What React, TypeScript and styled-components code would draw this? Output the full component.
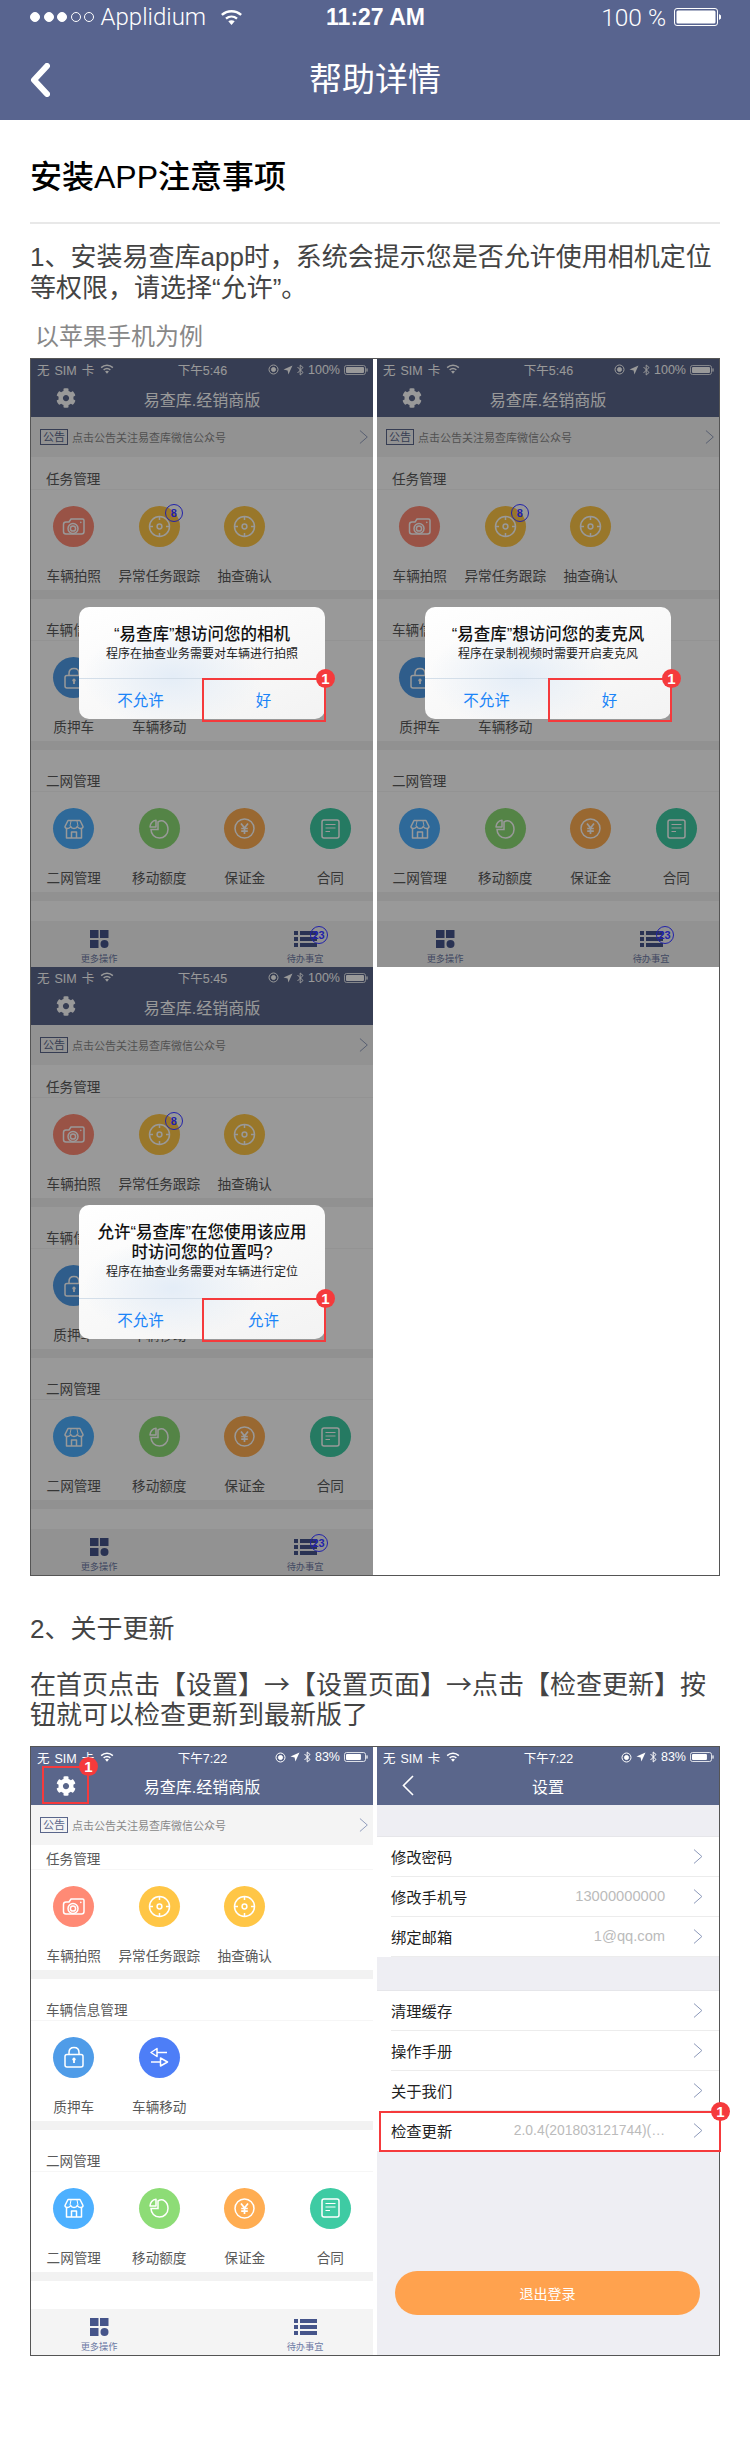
import React from 'react'
import styled, { createGlobalStyle } from 'styled-components'
import { FaCog } from 'react-icons/fa'

const GlobalStyle = createGlobalStyle`
    html, body {
        margin: 0;
        padding: 0;
        background: white;
        font-family: "Liberation Sans", "Noto Sans CJK SC", sans-serif;
    }
`;

const Page = styled.div`
    width: 750px;
    height: 2450px;
    background: white;
    overflow: hidden;
`;

/* page header */
const TopBar = styled.header`
    height: 120px;
    background-color: #58648f;
    color: white;
`;

const StatusRow = styled.div`
    height: 34px;
    padding: 0 29px 0 30px;
    display: grid;
    grid-template-columns: 1fr auto 1fr;
    align-items: center;
`;

const StatusLeft = styled.div`
    display: flex;
    align-items: center;
`;

const StatusRight = styled.div`
    display: flex;
    align-items: center;
    justify-content: flex-end;
`;

const Dot = styled.span<{ $filled?: boolean }>`
    width: 10px;
    height: 10px;
    margin-right: 3.5px;
    border-radius: 50%;
    box-sizing: border-box;
    border: 1px solid white;
    background-color: ${p => (p.$filled ? 'white' : 'transparent')};
`;

const Carrier = styled.span`
    font-family: Roboto, sans-serif;
    font-weight: 300;
    font-size: 24px;
    margin: 0 14px 0 3px;
`;

const Clock = styled.span`
    font-weight: 700;
    font-size: 23px;
`;

const Percent = styled.span`
    font-family: Roboto, sans-serif;
    font-weight: 300;
    font-size: 24.5px;
    margin-right: 8px;
`;

const NavRow = styled.div`
    height: 86px;
    padding: 6px 30px 0;
    box-sizing: border-box;
    display: grid;
    grid-template-columns: 1fr auto 1fr;
    align-items: center;
`;

const NavTitle = styled.div`
    font-size: 33px;
    line-height: 40px;
`;

/* article text */
const Article = styled.main`
    padding: 37px 30px 0;
`;

const Heading = styled.h1`
    margin: 0;
    font-size: 32px;
    line-height: 40px;
    font-weight: 500;
    color: black;
`;

const Rule = styled.hr`
    margin: 25px 0 0;
    border: none;
    height: 2px;
    background-color: #e8e8e8;
`;

const Paragraph = styled.p<{ $top: number }>`
    margin: ${p => p.$top}px 0 0;
    font-size: 26px;
    line-height: 30.5px;
    color: #444;
`;

const ArrowSign = styled.span`
    font-family: "Noto Sans CJK SC", sans-serif;
    line-height: 0;
`;

const Caption = styled.div`
    margin: 19px 0 6px;
    padding-left: 5px;
    font-size: 24px;
    line-height: 30px;
    color: #888;
`;

const Gallery = styled.div<{ $top?: number }>`
    margin-top: ${p => p.$top || 0}px;
    border: 1px solid #555;
    display: grid;
    grid-template-columns: 342px 342px;
    column-gap: 4px;
`;

/* phone screenshots */
const Screen = styled.div<{ $bg?: string }>`
    position: relative;
    height: 608px;
    display: flex;
    flex-direction: column;
    background-color: ${p => p.$bg || 'white'};
`;

const Dim = styled.div`
    position: absolute;
    inset: 0;
    z-index: 1;
    background-color: rgba(0, 0, 0, .4);
`;

const ScreenHead = styled.div`
    position: relative;
    height: 58px;
    flex: none;
    background-color: #5a668b;
    color: white;
`;

const MiniStatus = styled.div`
    height: 21px;
    padding: 0 5px 0 6px;
    display: grid;
    grid-template-columns: 1fr auto 1fr;
    align-items: center;
    font-size: 12.5px;
`;

const MiniLeft = styled.div`
    display: flex;
    align-items: center;
    gap: 6px;
    word-spacing: 1.5px;
`;

const MiniRight = styled.div`
    display: flex;
    align-items: center;
    justify-content: flex-end;
    gap: 4px;
`;

const MiniNav = styled.div`
    position: relative;
    height: 37px;
    display: flex;
    align-items: center;
    justify-content: center;
    font-size: 16px;
`;

const GearSlot = styled.span`
    position: absolute;
    left: 25px;
    top: 8px;
    display: flex;
`;

const BackSlot = styled.span`
    position: absolute;
    left: 25px;
    top: 7px;
    display: flex;
`;

const Notice = styled.div`
    height: 40px;
    flex: none;
    padding: 0 5px 0 9px;
    display: flex;
    align-items: center;
    background-color: #f4f4f4;
    color: #888;
    font-size: 11px;
`;

const NoticeTag = styled.span`
    border: 1px solid #5a668b;
    color: #5a668b;
    font-size: 11px;
    line-height: 14px;
    padding: 0 2px;
    margin-right: 4px;
`;

const NoticeText = styled.span`
    flex: 1;
`;

const SectionTitle = styled.div<{ $height: number }>`
    height: ${p => p.$height}px;
    box-sizing: border-box;
    border-bottom: 1px solid #f6f6f6;
    padding-left: 15px;
    display: flex;
    align-items: flex-end;
    font-size: 13.6px;
    line-height: 19px;
    color: #5a5a5a;
    flex: none;
`;

const IconGrid = styled.div`
    height: 100px;
    flex: none;
    display: grid;
    grid-template-columns: repeat(4, 85.5px);
`;

const Cell = styled.div`
    display: flex;
    flex-direction: column;
    align-items: center;
    padding-top: 16px;
    font-size: 13.6px;
    color: #5a5a5a;
`;

const Disc = styled.div<{ $color: string }>`
    position: relative;
    width: 41px;
    height: 41px;
    border-radius: 50%;
    background-color: ${p => p.$color};
    display: flex;
    align-items: center;
    justify-content: center;
`;

const CellLabel = styled.div`
    margin-top: 20px;
    line-height: 20px;
    white-space: nowrap;
`;

const Band = styled.div`
    height: 9px;
    flex: none;
    background-color: #f2f2f2;
`;

const Filler = styled.div`
    flex: 1;
`;

const TabBar = styled.div`
    height: 46px;
    flex: none;
    display: flex;
    justify-content: space-between;
    background-color: #f4f4f4;
`;

const Tab = styled.div`
    width: 136px;
    padding-top: 9px;
    display: flex;
    flex-direction: column;
    align-items: center;
    font-size: 9.2px;
    color: #6d7aa5;
`;

const TabIcon = styled.div`
    position: relative;
    height: 18px;
    display: flex;
`;

const TabLabel = styled.div`
    margin-top: 4px;
    line-height: 14px;
`;

const CountBadge = styled.span<{ $left: number; $top: number }>`
    position: absolute;
    z-index: 2;
    left: ${p => p.$left}px;
    top: ${p => p.$top}px;
    width: 18px;
    height: 18px;
    box-sizing: border-box;
    border: 1px solid #2222aa;
    border-radius: 50%;
    display: flex;
    align-items: center;
    justify-content: center;
    color: #2222aa;
    font-size: 11px;
    font-weight: 700;
`;

const Alert = styled.div<{ $top: number; $height: number }>`
    position: absolute;
    z-index: 2;
    left: 48px;
    top: ${p => p.$top}px;
    width: 246px;
    height: ${p => p.$height}px;
    border-radius: 10px;
    display: flex;
    flex-direction: column;
    background:
        radial-gradient(ellipse 90px 50px at 38% 62%, #e4edf7 0%, rgba(228, 237, 247, 0) 100%),
        linear-gradient(160deg, #ffffff, #f3f3f3);
`;

const AlertBody = styled.div`
    flex: 1;
    padding-top: 17px;
    box-sizing: border-box;
    border-bottom: 1px solid #d3dee9;
    text-align: center;
`;

const AlertTitle = styled.div`
    font-size: 16.5px;
    line-height: 20px;
    font-weight: 500;
    color: #111;
`;

const AlertText = styled.div`
    font-size: 12px;
    line-height: 20px;
    color: #222;
`;

const AlertActions = styled.div`
    position: relative;
    height: 40px;
    flex: none;
    display: grid;
    grid-template-columns: 1fr 1fr;
`;

const AlertButton = styled.div`
    display: flex;
    align-items: center;
    justify-content: center;
    color: #1a84f8;
    font-size: 15.5px;
`;

const RedBox = styled.div`
    position: absolute;
    z-index: 3;
    box-sizing: border-box;
    border: 2px solid #f53a3c;
`;

const AlertHighlight = styled(RedBox)`
    left: 123px;
    right: -1px;
    height: 44px;
    bottom: -3px;
`;

const GearHighlight = styled(RedBox)`
    left: 11px;
    top: 19px;
    width: 47px;
    height: 38px;
`;

const RowHighlight = styled(RedBox)`
    left: 2px;
    right: -2px;
    top: 0;
    bottom: -1px;
`;

const StepBadge = styled.span`
    position: absolute;
    right: -11px;
    top: -11px;
    width: 19px;
    height: 19px;
    border-radius: 50%;
    background-color: #f53a3c;
    display: flex;
    align-items: center;
    justify-content: center;
    color: white;
    font-size: 15px;
    font-weight: 700;
`;

/* settings screen */
const SettingsBody = styled.div`
    flex: 1;
    display: flex;
    flex-direction: column;
    background-color: #eeeef3;
`;

const RowGroup = styled.div<{ $top: number }>`
    margin-top: ${p => p.$top}px;
    background-color: white;
    padding-left: 14px;
    border-top: 1px solid #e6e6ea;
`;

const Row = styled.div`
    position: relative;
    height: 40px;
    box-sizing: border-box;
    padding-right: 16px;
    border-bottom: 1px solid #ececec;
    display: flex;
    align-items: center;
    font-size: 15.3px;
    color: #222;
`;

const RowLabel = styled.span`
    flex: 1;
`;

const RowValue = styled.span<{ $size?: number }>`
    margin-right: 28px;
    color: #bbb;
    font-size: ${p => p.$size || 14.7}px;
`;

const UpdateRow = styled.div`
    position: relative;
    margin-left: -14px;
`;

const UpdateInner = styled.div`
    padding-left: 14px;
`;

const Logout = styled.div`
    margin: 120px 19px 0 18px;
    height: 44px;
    border-radius: 22px;
    background-color: #ffa24e;
    color: white;
    font-size: 14px;
    display: flex;
    align-items: center;
    justify-content: center;
`;

/* drawings */
function Wifi({ w, color = 'white' }: { w: number; color?: string }) {
    return (
        <svg width={w} height={w * 0.72} viewBox="0 0 25 18" fill="none" stroke={color} strokeWidth="2.6">
            <path d="M2 6.5C8 1 17 1 23 6.5" />
            <path d="M6.5 10.5C10 7.5 15 7.5 18.5 10.5" />
            <path d="M9 13.2L12.5 17.4L16 13.2C14 11.8 11 11.8 9 13.2Z" fill={color} stroke="none" />
        </svg>
    )
}

function Chevron({ color = '#8a97b8', h = 14 }: { color?: string; h?: number }) {
    return (
        <svg width={h * 0.66} height={h} viewBox="0 0 10 15" fill="none" stroke={color} strokeWidth="1">
            <path d="M1 .5L9 7.5L1 14.5" />
        </svg>
    )
}

function MiniBattery({ level }: { level: number }) {
    return (
        <svg width="24" height="10" viewBox="0 0 24 10">
            <rect x=".5" y=".5" width="21" height="9" rx="2" fill="none" stroke="white" strokeWidth=".8" />
            <rect x="2" y="2" width={18 * level} height="6" rx="1" fill="white" />
            <rect x="22.4" y="3.4" width="1.2" height="3.2" fill="white" />
        </svg>
    )
}

function LockRound() {
    return (
        <svg width="11" height="11" viewBox="0 0 11 11" fill="none" stroke="white">
            <circle cx="5.5" cy="5.5" r="4.5" />
            <circle cx="5.5" cy="5.5" r="2" fill="white" />
        </svg>
    )
}

function Arrow() {
    return (
        <svg width="10" height="10" viewBox="0 0 10 10" fill="white">
            <path d="M.5 4.6L9.5 .5L5.4 9.5L4.6 5.4Z" />
        </svg>
    )
}

function Bluetooth() {
    return (
        <svg width="7" height="12" viewBox="0 0 7 12" fill="none" stroke="white">
            <path d="M.5 3L6 8.5L3.2 11V1L6 3.5L.5 9" />
        </svg>
    )
}

const glyph = { fill: 'none', stroke: 'white', strokeWidth: 1.5, strokeLinejoin: 'round' as const }

function CameraGlyph() {
    return (
        <svg width="23" height="21" viewBox="0 0 23 21" {...glyph}>
            <path d="M4 6H7L9 3H20.5C21.3 3 22 3.7 22 4.5V15.5C22 17 21 18 19.5 18H4C2.5 18 1.5 17 1.5 15.5V8.5C1.5 7 2.5 6 4 6Z" />
            <circle cx="11" cy="12.5" r="5" />
            <circle cx="11" cy="12.5" r="2.6" />
            <circle cx="18.8" cy="6.4" r=".8" fill="white" stroke="none" />
        </svg>
    )
}

function TargetGlyph() {
    return (
        <svg width="23" height="23" viewBox="0 0 23 23" {...glyph}>
            <circle cx="11.5" cy="11.5" r="10" />
            <circle cx="11.5" cy="11.5" r="2.4" />
            <path d="M11.5 1.5V5M11.5 18V21.5M1.5 11.5H5M18 11.5H21.5" />
        </svg>
    )
}

function LockGlyph() {
    return (
        <svg width="20" height="22" viewBox="0 0 20 22" {...glyph}>
            <path d="M5 9V6.5C5 3.5 7 1.5 10 1.5S15 3.5 15 6.5V9" />
            <rect x="1" y="8.5" width="18" height="12.5" rx="2" />
            <circle cx="10" cy="13.2" r="1.6" fill="white" stroke="none" />
            <path d="M10 14V17" strokeWidth="1.8" />
        </svg>
    )
}

function MoveGlyph() {
    return (
        <svg width="19" height="20" viewBox="0 0 19 20" {...glyph}>
            <path d="M7 1.5L1 5.5L7 9.5Z" />
            <path d="M7 5.5H17" />
            <path d="M10.5 11L17.5 15L10.5 19Z" />
            <path d="M1 15H10.5" />
        </svg>
    )
}

function ShopGlyph() {
    return (
        <svg width="20" height="20" viewBox="0 0 20 20" {...glyph}>
            <path d="M4 1.5H16L19 7.5C19 9 17.5 9.5 16.5 9.5C15 9.5 14 8.8 13.3 7.5C12.8 8.8 11.5 9.5 10 9.5S7.2 8.8 6.7 7.5C6 8.8 5 9.5 3.5 9.5C2.5 9.5 1 9 1 7.5Z" />
            <path d="M2.5 9.5V19H17.5V9.5" />
            <path d="M7.5 19V13H12.5V19" />
            <path d="M7 2L6 7M13 2L14 7" strokeWidth="1" />
        </svg>
    )
}

function PieGlyph() {
    return (
        <svg width="20" height="20" viewBox="0 0 20 20" {...glyph}>
            <path d="M9 3C14-.3 19 4 19 10.5C19 15.5 15 19 10.5 19C5.5 19 2 15 2 10.5H9Z" strokeLinejoin="miter" />
            <path d="M7 1.2V8H1C1 4.5 3.5 1.5 7 1.2Z" />
        </svg>
    )
}

function YenGlyph() {
    return (
        <svg width="21" height="21" viewBox="0 0 21 21" {...glyph}>
            <circle cx="10.5" cy="10.5" r="9.5" />
            <path d="M7 5.5L10.5 10L14 5.5M10.5 10V16M7.2 10.5H13.8M7.2 13.2H13.8" strokeWidth="1.7" />
        </svg>
    )
}

function DocGlyph() {
    return (
        <svg width="19" height="20" viewBox="0 0 19 20" {...glyph}>
            <rect x="1" y="1" width="17" height="18" rx="2" />
            <path d="M4.5 5.5H14.5M4.5 9H14.5M4.5 12.5H9" strokeWidth="1.2" />
        </svg>
    )
}

function GridIcon() {
    return (
        <svg width="19" height="18" viewBox="0 0 19 18" fill="#45548a">
            <rect width="8.5" height="8" />
            <rect x="10" width="8.5" height="8" />
            <rect y="10" width="8.5" height="8" />
            <circle cx="14.5" cy="14" r="4" />
        </svg>
    )
}

function ListIcon() {
    return (
        <svg width="23" height="18" viewBox="0 0 23 18" fill="#45548a">
            <rect y="1" width="4" height="4" />
            <rect x="6" y="1" width="17" height="4" />
            <rect y="7" width="4" height="4" />
            <rect x="6" y="7" width="17" height="4" />
            <rect y="13" width="4" height="4" />
            <rect x="6" y="13" width="17" height="4" />
        </svg>
    )
}

const sections = [
    {
        title: '任务管理',
        items: [
            { label: '车辆拍照', color: '#ff8a75', icon: <CameraGlyph /> },
            { label: '异常任务跟踪', color: '#ffc646', icon: <TargetGlyph />, count: true },
            { label: '抽查确认', color: '#ffc646', icon: <TargetGlyph /> },
        ],
    },
    {
        title: '车辆信息管理',
        items: [
            { label: '质押车', color: '#4f9ce8', icon: <LockGlyph /> },
            { label: '车辆移动', color: '#4d7ef7', icon: <MoveGlyph /> },
        ],
    },
    {
        title: '二网管理',
        items: [
            { label: '二网管理', color: '#4db0ff', icon: <ShopGlyph /> },
            { label: '移动额度', color: '#8ddc76', icon: <PieGlyph /> },
            { label: '保证金', color: '#ffad52', icon: <YenGlyph /> },
            { label: '合同', color: '#3ecba3', icon: <DocGlyph /> },
        ],
    },
]

function MiniStatusBar({ time, level, power }: { time: string; level: number; power: string }) {
    return (
        <MiniStatus>
            <MiniLeft>无 SIM 卡 <Wifi w={14} /></MiniLeft>
            <span>{time}</span>
            <MiniRight>
                <LockRound />
                <Arrow />
                <Bluetooth />
                {power}
                <MiniBattery level={level} />
            </MiniRight>
        </MiniStatus>
    )
}

interface AlertInfo {
    top: number
    height: number
    title: React.ReactNode
    text: string
    ok: string
}

interface HomeProps {
    time: string
    level?: number
    power?: string
    alert?: AlertInfo
    firstTitle: number
    stepOnGear?: boolean
}

function HomeScreen({ time, level = 1, power = '100%', alert, firstTitle, stepOnGear }: HomeProps) {
    return (
        <Screen>
            <ScreenHead>
                <MiniStatusBar time={time} level={level} power={power} />
                <MiniNav>
                    <GearSlot><FaCog size={20} /></GearSlot>
                    易查库.经销商版
                </MiniNav>
            </ScreenHead>
            <Notice>
                <NoticeTag>公告</NoticeTag>
                <NoticeText>点击公告关注易查库微信公众号</NoticeText>
                <Chevron />
            </Notice>
            {sections.map((section, i) => (
                <React.Fragment key={section.title}>
                    <SectionTitle $height={i === 0 ? firstTitle : 42}>{section.title}</SectionTitle>
                    <IconGrid>
                        {section.items.map(item => (
                            <Cell key={item.label}>
                                <Disc $color={item.color}>
                                    {item.icon}
                                    {alert && 'count' in item && <CountBadge $left={26} $top={-2}>8</CountBadge>}
                                </Disc>
                                <CellLabel>{item.label}</CellLabel>
                            </Cell>
                        ))}
                    </IconGrid>
                    <Band />
                </React.Fragment>
            ))}
            <Filler />
            <TabBar>
                <Tab>
                    <TabIcon><GridIcon /></TabIcon>
                    <TabLabel>更多操作</TabLabel>
                </Tab>
                <Tab>
                    <TabIcon>
                        <ListIcon />
                        {alert && <CountBadge $left={16} $top={-4}>23</CountBadge>}
                    </TabIcon>
                    <TabLabel>待办事宜</TabLabel>
                </Tab>
            </TabBar>
            {alert && (
                <>
                    <Dim />
                    <Alert $top={alert.top} $height={alert.height}>
                        <AlertBody>
                            <AlertTitle>{alert.title}</AlertTitle>
                            <AlertText>{alert.text}</AlertText>
                        </AlertBody>
                        <AlertActions>
                            <AlertButton>不允许</AlertButton>
                            <AlertButton>{alert.ok}</AlertButton>
                        </AlertActions>
                        <AlertHighlight>
                            <StepBadge>1</StepBadge>
                        </AlertHighlight>
                    </Alert>
                </>
            )}
            {stepOnGear && (
                <GearHighlight>
                    <StepBadge>1</StepBadge>
                </GearHighlight>
            )}
        </Screen>
    )
}

function SettingsScreen() {
    return (
        <Screen>
            <ScreenHead>
                <MiniStatusBar time="下午7:22" level={0.83} power="83%" />
                <MiniNav>
                    <BackSlot>
                        <svg width="12" height="21" viewBox="0 0 12 21" fill="none" stroke="white" strokeWidth="1.6">
                            <path d="M11 1L1.5 10.5L11 20" />
                        </svg>
                    </BackSlot>
                    设置
                </MiniNav>
            </ScreenHead>
            <SettingsBody>
                <RowGroup $top={31}>
                    <Row><RowLabel>修改密码</RowLabel><Chevron h={15} /></Row>
                    <Row><RowLabel>修改手机号</RowLabel><RowValue>13000000000</RowValue><Chevron h={15} /></Row>
                    <Row><RowLabel>绑定邮箱</RowLabel><RowValue>1@qq.com</RowValue><Chevron h={15} /></Row>
                </RowGroup>
                <RowGroup $top={33}>
                    <Row><RowLabel>清理缓存</RowLabel><Chevron h={15} /></Row>
                    <Row><RowLabel>操作手册</RowLabel><Chevron h={15} /></Row>
                    <Row><RowLabel>关于我们</RowLabel><Chevron h={15} /></Row>
                    <UpdateRow>
                        <UpdateInner>
                            <Row><RowLabel>检查更新</RowLabel><RowValue $size={13.9}>2.0.4(201803121744)(…</RowValue><Chevron h={15} /></Row>
                        </UpdateInner>
                        <RowHighlight>
                            <StepBadge>1</StepBadge>
                        </RowHighlight>
                    </UpdateRow>
                </RowGroup>
                <Logout>退出登录</Logout>
            </SettingsBody>
        </Screen>
    )
}

export default function App() {
    return (
        <Page>
            <GlobalStyle />
            <TopBar>
                <StatusRow>
                    <StatusLeft>
                        <Dot $filled />
                        <Dot $filled />
                        <Dot $filled />
                        <Dot />
                        <Dot />
                        <Carrier>Applidium</Carrier>
                        <Wifi w={23} />
                    </StatusLeft>
                    <Clock>11:27 AM</Clock>
                    <StatusRight>
                        <Percent>100 %</Percent>
                        <svg width="47" height="18" viewBox="0 0 47 18">
                            <rect x=".5" y=".5" width="43" height="17" rx="2.5" fill="none" stroke="white" />
                            <rect x="2.5" y="2.5" width="39" height="13" rx="1.5" fill="white" />
                            <path d="M45 6L47 7.5V10.5L45 12Z" fill="white" />
                        </svg>
                    </StatusRight>
                </StatusRow>
                <NavRow>
                    <svg width="20" height="34" viewBox="0 0 20 34" fill="none" stroke="white" strokeWidth="6" strokeLinecap="round" strokeLinejoin="round">
                        <path d="M17 3L4 17L17 31" />
                    </svg>
                    <NavTitle>帮助详情</NavTitle>
                </NavRow>
            </TopBar>
            <Article>
                <Heading>安装APP注意事项</Heading>
                <Rule />
                <Paragraph $top={18}>1、安装易查库app时，系统会提示您是否允许使用相机定位等权限，请选择“允许”。</Paragraph>
                <Caption>以苹果手机为例</Caption>
                <Gallery>
                    <HomeScreen
                        time="下午5:46"
                        firstTitle={33}
                        alert={{ top: 248, height: 112, title: '“易查库”想访问您的相机', text: '程序在抽查业务需要对车辆进行拍照', ok: '好' }}
                    />
                    <HomeScreen
                        time="下午5:46"
                        firstTitle={33}
                        alert={{ top: 248, height: 112, title: '“易查库”想访问您的麦克风', text: '程序在录制视频时需要开启麦克风', ok: '好' }}
                    />
                    <HomeScreen
                        time="下午5:45"
                        firstTitle={33}
                        alert={{ top: 238, height: 134, title: <>允许“易查库”在您使用该应用<br />时访问您的位置吗?</>, text: '程序在抽查业务需要对车辆进行定位', ok: '允许' }}
                    />
                </Gallery>
                <Paragraph $top={38}>2、关于更新</Paragraph>
                <Paragraph $top={25}>在首页点击【设置】<ArrowSign>→</ArrowSign>【设置页面】<ArrowSign>→</ArrowSign>点击【检查更新】按<br />钮就可以检查更新到最新版了</Paragraph>
                <Gallery $top={15}>
                    <HomeScreen time="下午7:22" level={0.83} power="83%" firstTitle={25} stepOnGear />
                    <SettingsScreen />
                </Gallery>
            </Article>
        </Page>
    )
}
